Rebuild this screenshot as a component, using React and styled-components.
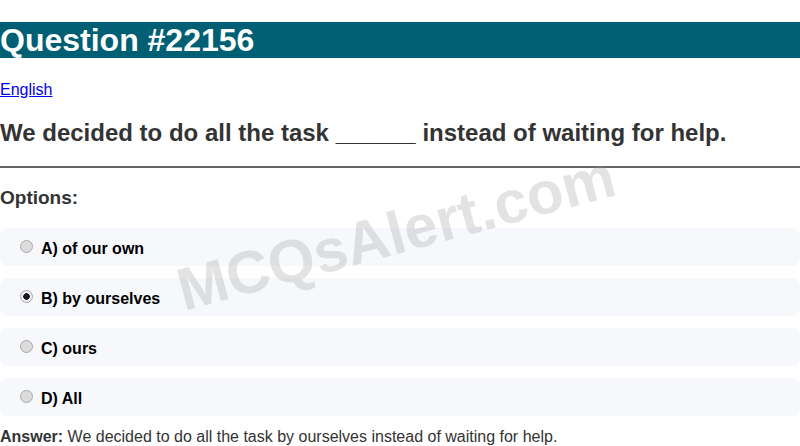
import React from 'react';
import styled, { createGlobalStyle } from 'styled-components';

const GlobalStyle = createGlobalStyle`
  body {
    margin: 0;
    font-family: 'Liberation Sans', Arial, sans-serif;
    background: #fff;
    color: #333;
  }
`;

const Page = styled.div`
  position: relative;
  overflow: hidden;
  min-height: 446px;
`;

const Title = styled.h1`
  margin: 22px 0 23px;
  font-size: 32px;
  font-weight: bold;
  color: #fff;
  background: #005f73;
  line-height: 36px;
`;

const LangRow = styled.p`
  margin: 16px 0;
  font-size: 16px;
`;

const LangLink = styled.a`
  color: #0000ee;
  text-decoration: underline;
`;

const Question = styled.h2`
  margin: 20px 0 19px;
  font-size: 24px;
  font-weight: bold;
  color: #333;
`;

const Rule = styled.hr`
  margin: 0;
  border: none;
  border-top: 2px solid #666;
`;

const OptionsHeading = styled.h3`
  margin: 19px 0 19px;
  font-size: 19px;
  font-weight: bold;
  color: #333;
`;

const OptionList = styled.div`
  display: flex;
  flex-direction: column;
  gap: 12px;
`;

const Option = styled.label`
  display: flex;
  align-items: center;
  gap: 8px;
  height: 38px;
  box-sizing: border-box;
  padding: 3px 20px 0;
  background: #f7f8fc;
  border-radius: 8px;
  font-size: 16px;
  font-weight: bold;
  color: #000;
`;

const Radio = styled.input`
  appearance: none;
  margin: 0 0 5px;
  width: 13px;
  height: 13px;
  border-radius: 50%;
  border: 1px solid #a9a9a9;
  background: #dcdcdc;
  box-sizing: border-box;

  &:checked {
    background: radial-gradient(circle, #1a1a1a 0 3px, #f0f0f0 3.5px);
  }
`;

const Answer = styled.p`
  margin: 12px 0 0;
  font-size: 16px;
  color: #333;
`;

const Watermark = styled.div`
  position: absolute;
  left: 396px;
  top: 233px;
  transform: translate(-50%, -50%) rotate(-15deg);
  font-size: 60px;
  font-weight: bold;
  color: rgba(150, 150, 150, 0.27);
  white-space: nowrap;
  pointer-events: none;
`;

const options = [
  { key: 'A', text: 'of our own' },
  { key: 'B', text: 'by ourselves', checked: true },
  { key: 'C', text: 'ours' },
  { key: 'D', text: 'All' },
];

export default function App() {
  return (
    <Page>
      <GlobalStyle />
      <Title>Question #22156</Title>
      <LangRow>
        <LangLink href="#">English</LangLink>
      </LangRow>
      <Question>We decided to do all the task ______ instead of waiting for help.</Question>
      <Rule />
      <OptionsHeading>Options:</OptionsHeading>
      <OptionList>
        {options.map((o) => (
          <Option key={o.key}>
            <Radio type="radio" name="opt" defaultChecked={!!o.checked} />
            {o.key}) {o.text}
          </Option>
        ))}
      </OptionList>
      <Answer>
        <b>Answer:</b> We decided to do all the task by ourselves instead of waiting for help.
      </Answer>
      <Watermark>MCQsAlert.com</Watermark>
    </Page>
  );
}
